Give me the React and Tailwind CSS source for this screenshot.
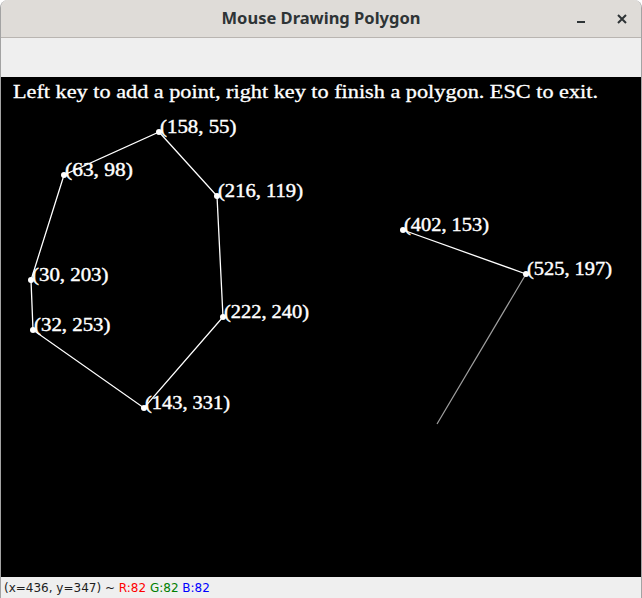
import React from "react";

const poly = [
    [158, 55],
    [216, 119],
    [222, 240],
    [143, 331],
    [32, 253],
    [30, 203],
    [63, 98],
];

const open = [
    [402, 153],
    [525, 197],
];

const label = ([x, y]) => `(${x}, ${y})`;

function Canvas() {
    const pts = [...poly, ...open];
    return (
        <svg width="640" height="500" viewBox="0 0 640 500" className="block">
            <rect width="640" height="500" fill="#000" />
            <text
                x="12"
                y="21"
                fill="#fff"
                stroke="#fff"
                strokeWidth="0.3"
                fontSize="18"
                textLength="585"
                lengthAdjust="spacingAndGlyphs"
                style={{ fontFamily: '"Liberation Serif", serif' }}
            >
                Left key to add a point, right key to finish a polygon. ESC to exit.
            </text>

            <polygon
                points={poly.map((p) => p.join(",")).join(" ")}
                fill="none"
                stroke="#fff"
                strokeWidth="1.3"
            />
            <polyline
                points={open.map((p) => p.join(",")).join(" ")}
                fill="none"
                stroke="#fff"
                strokeWidth="1.3"
            />
            {/* rubber band line to the mouse */}
            <line x1="525" y1="197" x2="436" y2="347" stroke="#a0a0a0" strokeWidth="1.2" />

            {pts.map((p) => (
                <g key={label(p)}>
                    <circle cx={p[0]} cy={p[1]} r="3" fill="#fff" />
                    <text
                        x={p[0] + 1}
                        y={p[1] + 1}
                        fill="#fff"
                        stroke="#fff"
                        strokeWidth="0.4"
                        fontSize="18"
                        textLength={label(p).length * 8.5}
                        lengthAdjust="spacingAndGlyphs"
                        style={{ fontFamily: '"Liberation Serif", serif' }}
                    >
                        {label(p)}
                    </text>
                </g>
            ))}
        </svg>
    );
}

export default function App() {
    return (
        <div className="w-[642px] h-[598px] bg-white">
            <div className="flex h-full w-full flex-col overflow-hidden rounded-t-[8px] border-x border-[#a3a3a3] bg-[#efefef]">
                <header className="relative flex h-[38px] shrink-0 items-center justify-center border-b border-[#b9b5b1] bg-[#dfdcd8]">
                    <span
                        className="text-[16.5px] font-bold text-[#2e3436]"
                        style={{ fontFamily: '"Noto Sans", sans-serif' }}
                    >
                        Mouse Drawing Polygon
                    </span>
                    <div className="absolute right-0 top-0 flex h-full items-center">
                        <div className="flex h-full w-[44px] items-center justify-center pt-[6px]">
                            <div className="h-[2px] w-[8px] bg-[#2e3436]" />
                        </div>
                        <div className="flex h-full w-[38px] items-center justify-center">
                            <svg width="10" height="10" viewBox="0 0 10 10">
                                <path d="M1 1 L9 9 M9 1 L1 9" stroke="#2e3436" strokeWidth="2" />
                            </svg>
                        </div>
                    </div>
                </header>

                <div className="h-[39px] shrink-0 bg-[#efefef]" />

                <Canvas />

                <div
                    className="flex h-[21px] items-center pl-[3px] text-[12px] text-[#1e1e1e]"
                    style={{ fontFamily: '"DejaVu Sans", sans-serif' }}
                >
                    <span>(x=436, y=347) ~&nbsp;</span>
                    <span className="text-[#ff0000]">R:82&nbsp;</span>
                    <span className="text-[#008000]">G:82&nbsp;</span>
                    <span className="text-[#0000ff]">B:82</span>
                </div>
            </div>
        </div>
    );
}
